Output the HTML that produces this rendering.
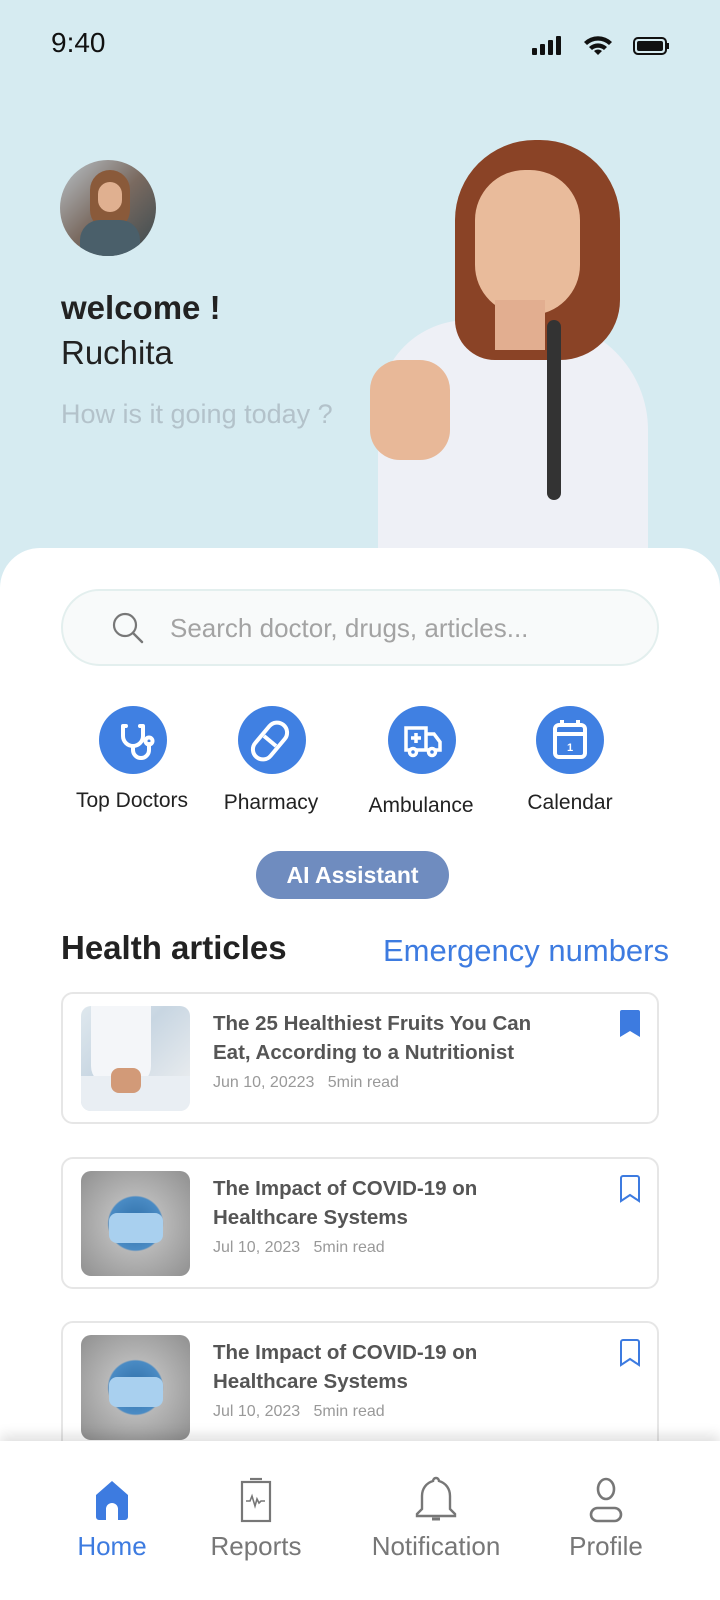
<!DOCTYPE html>
<html><head><meta charset="utf-8"><style>
*{margin:0;padding:0;box-sizing:border-box}
body{width:720px;height:1600px;overflow:hidden;font-family:"Liberation Sans",sans-serif;background:#d6ebf1;position:relative}
.abs{position:absolute}
.sheet{position:absolute;left:0;top:548px;width:720px;height:1052px;background:#fff;border-radius:40px 40px 0 0}
.search{left:61px;top:589px;width:598px;height:77px;border-radius:39px;background:#f8fafa;border:2px solid #e3efee}
.cat{position:absolute;width:68px;height:68px;border-radius:50%;background:#4080e2;top:706px}
.catl{position:absolute;top:790px;font-size:21px;color:#222;text-align:center;width:170px}
.card{position:absolute;left:61px;width:598px;height:132px;border:2px solid #e6e6e6;border-radius:12px;background:#fff}
.thumb{position:absolute;left:18px;top:12px;width:109px;height:105px;border-radius:10px;overflow:hidden}
.title{position:absolute;left:150px;top:15px;font-size:20.5px;font-weight:bold;color:#555;line-height:29px;width:345px}
.date{position:absolute;left:150px;top:80px;font-size:16px;color:#999}
.nav{position:absolute;left:0;top:1441px;width:720px;height:159px;background:#fff;box-shadow:0 -6px 12px rgba(0,0,0,.12)}
.navl{position:absolute;top:90px;font-size:26px;color:#777;text-align:center;width:180px}
</style></head><body>
<div class="abs" style="left:51px;top:27px;font-size:28px;color:#111">9:40</div>
<svg class="abs" style="left:530px;top:34px" width="140" height="24" viewBox="0 0 140 24">
<rect x="2" y="14" width="5" height="7" rx="1" fill="#111"/><rect x="10" y="10" width="5" height="11" rx="1" fill="#111"/><rect x="18" y="6" width="5" height="15" rx="1" fill="#111"/><rect x="26" y="2" width="5" height="19" rx="1" fill="#111"/>
<path d="M68 21l4-4a6 6 0 0 0-8 0zM59 13a13 13 0 0 1 18 0l-3 3a9 9 0 0 0-12 0zM54 8a20 20 0 0 1 28 0l-3 3a16 16 0 0 0-22 0z" fill="#111"/>
<rect x="104" y="4" width="32" height="16" rx="4" fill="none" stroke="#111" stroke-width="2"/><rect x="107" y="7" width="26" height="10" rx="2" fill="#111"/><rect x="137" y="9" width="2" height="6" fill="#111"/>
</svg>
<div class="abs" style="left:60px;top:160px;width:96px;height:96px;border-radius:50%;overflow:hidden;background:linear-gradient(135deg,#b9c2c8,#7a6a60 50%,#3a4a50)">
<div class="abs" style="left:30px;top:10px;width:40px;height:60px;border-radius:20px;background:#8a5a3a"></div>
<div class="abs" style="left:38px;top:22px;width:24px;height:30px;border-radius:12px;background:#e0b090"></div>
<div class="abs" style="left:20px;top:60px;width:60px;height:40px;border-radius:20px 20px 0 0;background:#4a5f6a"></div>
</div>
<div class="abs" style="left:61px;top:289px;font-size:33px;font-weight:bold;color:#222">welcome !</div>
<div class="abs" style="left:61px;top:334px;font-size:33px;color:#222">Ruchita</div>
<div class="abs" style="left:61px;top:399px;font-size:27px;color:#b3c2ca">How is it going today ?</div>
<div class="abs" style="left:378px;top:320px;width:270px;height:240px;border-radius:90px 110px 0 0;background:#eef0f6"></div>
<div class="abs" style="left:455px;top:140px;width:165px;height:220px;border-radius:80px 80px 60px 40px;background:#8a4326"></div>
<div class="abs" style="left:475px;top:170px;width:105px;height:145px;border-radius:50px;background:#e9bb9b"></div>
<div class="abs" style="left:495px;top:300px;width:50px;height:50px;background:#e2ae90"></div>
<div class="abs" style="left:370px;top:360px;width:80px;height:100px;border-radius:30px;background:#e8b898"></div>
<div class="abs" style="left:547px;top:320px;width:14px;height:180px;border-radius:7px;background:#333"></div>
<div class="sheet"></div>
<div class="abs search"></div>
<svg class="abs" style="left:110px;top:610px" width="36" height="36" viewBox="0 0 36 36"><circle cx="15" cy="15" r="11" fill="none" stroke="#777" stroke-width="2.2"/><path d="M23 23l9 9" stroke="#777" stroke-width="2.4" stroke-linecap="round"/></svg>
<div class="abs" style="left:170px;top:613px;font-size:26px;color:#a3a3a3">Search doctor, drugs, articles...</div>
<div class="cat" style="left:99px"><svg width="68" height="68" viewBox="0 0 68 68" fill="none" stroke="#fff" stroke-width="4" stroke-linecap="round"><path d="M24 20v10a10 10 0 0 0 20 0V20M44 20h-3M24 20h3M34 40v4a8 8 0 0 0 16 0v-6"/><circle cx="50" cy="35" r="3.5"/></svg></div>
<div class="cat" style="left:238px"><svg width="68" height="68" viewBox="0 0 68 68" fill="none" stroke="#fff" stroke-width="4"><rect x="22" y="14" width="20" height="42" rx="10" transform="rotate(40 32 35)"/><path d="M26 30l12 10"/></svg></div>
<div class="cat" style="left:388px"><svg width="68" height="68" viewBox="0 0 68 68" fill="none" stroke="#fff" stroke-width="3.5"><path d="M18 22h20v22H18zM38 28h8l6 8v8H38"/><path d="M28 27v10M23 32h10"/><circle cx="25" cy="46" r="3.5" fill="#4080e2"/><circle cx="44" cy="46" r="3.5" fill="#4080e2"/></svg></div>
<div class="cat" style="left:536px"><svg width="68" height="68" viewBox="0 0 68 68" fill="none" stroke="#fff" stroke-width="4"><rect x="19" y="19" width="30" height="32" rx="4"/><path d="M26 14v7M42 14v7M19 28h30"/><text x="34" y="45" font-size="11" font-weight="bold" fill="#fff" stroke="none" text-anchor="middle" font-family="Liberation Sans">1</text></svg></div>
<div class="catl" style="left:47px;top:789px">Top Doctors</div>
<div class="catl" style="left:186px;top:791px">Pharmacy</div>
<div class="catl" style="left:336px;top:794px">Ambulance</div>
<div class="catl" style="left:485px;top:791px">Calendar</div>
<div class="abs" style="left:256px;top:851px;width:193px;height:48px;border-radius:24px;background:#6f8cbf;color:#fff;font-size:23px;font-weight:bold;text-align:center;line-height:48px">AI Assistant</div>
<div class="abs" style="left:61px;top:929px;font-size:33px;font-weight:bold;color:#222">Health articles</div>
<div class="abs" style="right:51px;top:933px;font-size:31px;color:#3d7be0">Emergency numbers</div>

<div class="card" style="top:992px">
<div class="thumb" style="background:linear-gradient(135deg,#dfe8ee,#c8d6e2 40%,#f2f2f2)"><div class="abs" style="left:10px;top:0;width:60px;height:80px;background:#f4f6f9;border-radius:0 0 20px 20px"></div><div class="abs" style="left:0;top:70px;width:109px;height:35px;background:#e9eef3"></div><div class="abs" style="left:30px;top:62px;width:30px;height:25px;background:#d29a78;border-radius:8px"></div></div>
<div class="title">The 25 Healthiest Fruits You Can Eat, According to a Nutritionist</div>
<div class="date">Jun 10, 20223 &nbsp;&nbsp;5min read</div>
<svg class="abs" style="left:556px;top:16px" width="22" height="28" viewBox="0 0 22 28"><path d="M1 2a2 2 0 0 1 2-2h16a2 2 0 0 1 2 2v25l-10-6-10 6z" fill="#3d7be0"/></svg>
</div>
<div class="card" style="top:1157px">
<div class="thumb" style="background:radial-gradient(circle at 50% 50%,#2f6fa8 0,#4a8bc4 35%,#b8b8b8 37%,#909090 100%)"><div class="abs" style="left:28px;top:42px;width:54px;height:30px;background:#a9d0ef;border-radius:8px"></div></div>
<div class="title" style="width:300px">The Impact of COVID-19 on Healthcare Systems</div>
<div class="date">Jul 10, 2023 &nbsp;&nbsp;5min read</div>
<svg class="abs" style="left:556px;top:16px" width="22" height="28" viewBox="0 0 22 28"><path d="M2 3a2 2 0 0 1 2-2h14a2 2 0 0 1 2 2v23l-9-6-9 6z" fill="none" stroke="#3d7be0" stroke-width="2"/></svg>
</div>
<div class="card" style="top:1321px">
<div class="thumb" style="background:radial-gradient(circle at 50% 50%,#2f6fa8 0,#4a8bc4 35%,#b8b8b8 37%,#909090 100%)"><div class="abs" style="left:28px;top:42px;width:54px;height:30px;background:#a9d0ef;border-radius:8px"></div></div>
<div class="title" style="width:300px">The Impact of COVID-19 on Healthcare Systems</div>
<div class="date">Jul 10, 2023 &nbsp;&nbsp;5min read</div>
<svg class="abs" style="left:556px;top:16px" width="22" height="28" viewBox="0 0 22 28"><path d="M2 3a2 2 0 0 1 2-2h14a2 2 0 0 1 2 2v23l-9-6-9 6z" fill="none" stroke="#3d7be0" stroke-width="2"/></svg>
</div>

<div class="nav">
<svg class="abs" style="left:92px;top:38px" width="40" height="42" viewBox="0 0 40 42"><path d="M4 16L20 2l16 14v22a3 3 0 0 1-3 3h-7V30a6 6 0 0 0-12 0v11H7a3 3 0 0 1-3-3z" fill="#3d7be0"/></svg>
<svg class="abs" style="left:240px;top:36px" width="32" height="46" viewBox="0 0 32 46" fill="none" stroke="#777" stroke-width="2.2"><path d="M10 2h12"/><rect x="2" y="5" width="28" height="39"/><path d="M6 24h4l2-5 3 10 2-7 2 4 2-2h4" stroke-width="1.6"/></svg>
<svg class="abs" style="left:414px;top:34px" width="44" height="50" viewBox="0 0 44 50" fill="none" stroke="#777" stroke-width="2.4"><path d="M22 3c-2 0-3 2-3 3-7 2-11 8-11 15v13l-5 5v2h38v-2l-5-5V21c0-7-4-13-11-15 0-1-1-3-3-3z"/><path d="M18 44h8" stroke-width="3"/></svg>
<svg class="abs" style="left:588px;top:36px" width="36" height="46" viewBox="0 0 36 46" fill="none" stroke="#777" stroke-width="2.6"><ellipse cx="18" cy="12" rx="8" ry="10"/><rect x="3" y="31" width="30" height="13" rx="6.5"/></svg>
<div class="navl" style="left:22px;color:#3d7be0">Home</div>
<div class="navl" style="left:166px">Reports</div>
<div class="navl" style="left:346px">Notification</div>
<div class="navl" style="left:516px">Profile</div>
</div>
</body></html>
